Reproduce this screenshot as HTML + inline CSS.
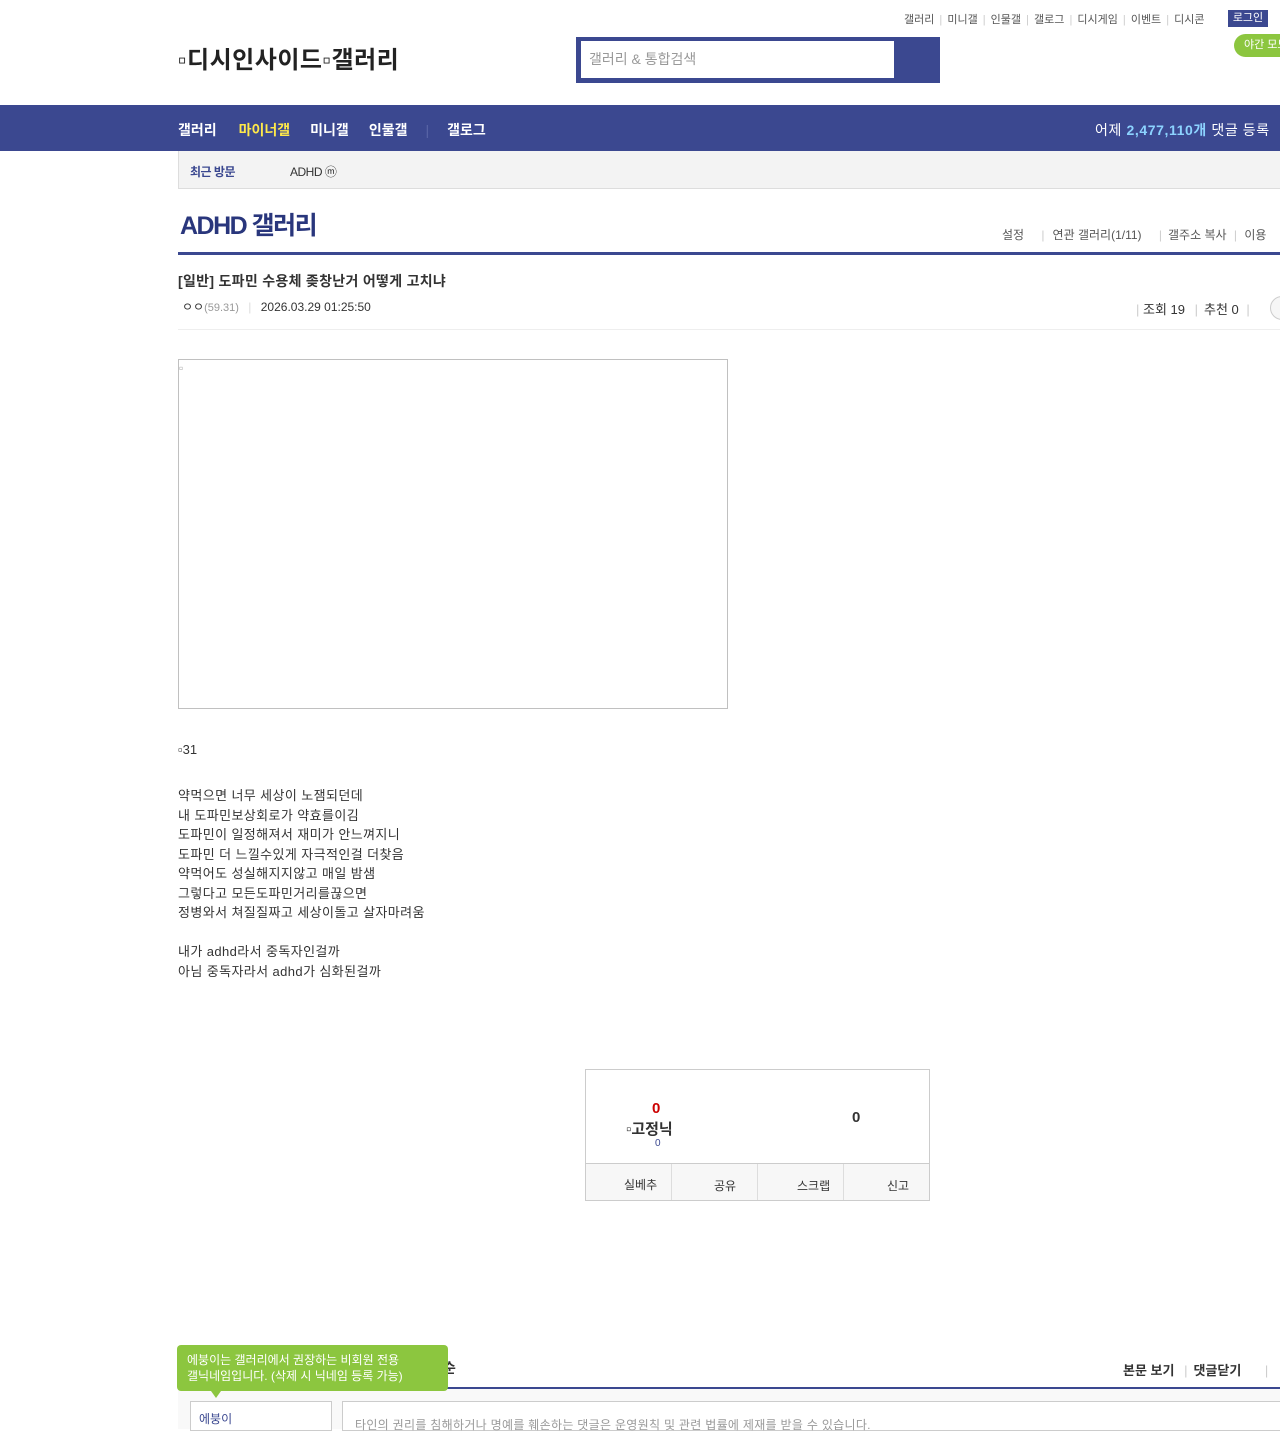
<!DOCTYPE html>
<html><head><meta charset="utf-8">
<style>
*{margin:0;padding:0;box-sizing:border-box}
body{width:1280px;height:1429px;overflow:hidden;background:#fff;font-family:"Liberation Sans","Noto Sans CJK KR",sans-serif;color:#333;position:relative}
.a{position:absolute;white-space:nowrap}
</style></head><body>
<div class="a" style="left:904px;top:11px;font-size:11px;color:#555;word-spacing:2px">갤러리 <span style="color:#ccc">|</span> 미니갤 <span style="color:#ccc">|</span> 인물갤 <span style="color:#ccc">|</span> 갤로그 <span style="color:#ccc">|</span> 디시게임 <span style="color:#ccc">|</span> 이벤트 <span style="color:#ccc">|</span> 디시콘</div>
<div class="a" style="left:1228px;top:10px;width:40px;height:17px;background:#3b4890;color:#fff;font-size:11px;text-align:center;line-height:17px">로그인</div>
<div class="a" style="left:1234px;top:34px;width:60px;height:23px;background:#8cc63f;color:#fff;font-size:11px;line-height:23px;padding-left:10px;border-radius:12px">야간 모드</div>
<div class="a" style="left:178px;top:40px;font-size:24px;font-weight:bold;color:#222;letter-spacing:0.5px">▫디시인사이드▫갤러리</div>
<div class="a" style="left:576px;top:37px;width:364px;height:46px;background:#3b4890"></div>
<div class="a" style="left:581px;top:41px;width:313px;height:37px;background:#fff;font-size:14px;color:#999;line-height:37px;padding-left:8px">갤러리 &amp; 통합검색</div>
<div class="a" style="left:0;top:105px;width:1280px;height:46px;background:#3b4890"></div>
<div class="a" style="left:178px;top:120px;font-size:14px;font-weight:bold;color:#fff">갤러리<span style="color:#ffe94a;margin-left:22px">마이너갤</span><span style="margin-left:20px">미니갤</span><span style="margin-left:20px">인물갤</span><span style="color:#5a66a6;margin:0 18px;font-weight:normal">|</span>갤로그</div>
<div class="a" style="left:1095px;top:120px;font-size:14px;color:#fff;letter-spacing:0.6px">어제 <b style="color:#8cd3ff">2,477,110개</b> 댓글 등록</div>
<div class="a" style="left:178px;top:151px;width:1110px;height:38px;background:#f3f3f3;border:1px solid #ddd;border-top:none"></div>
<div class="a" style="left:190px;top:163px;font-size:12px;font-weight:bold;color:#3b4890;letter-spacing:-0.5px">최근 방문</div>
<div class="a" style="left:290px;top:163px;font-size:12px;color:#333;letter-spacing:-0.5px">ADHD ⓜ</div>
<div class="a" style="left:180px;top:206px;font-size:25px;font-weight:bold;color:#29367c;letter-spacing:-1.5px">ADHD 갤러리</div>
<div class="a" style="left:1002px;top:226px;font-size:12px;color:#555">설정 <span style="color:#ccc;margin:0 8px 0 14px">|</span>연관 갤러리(1/11) <span style="color:#ccc;margin:0 6px 0 14px">|</span>갤주소 복사 <span style="color:#ccc;margin:0 4px">|</span> 이용</div>
<div class="a" style="left:178px;top:252px;width:1110px;height:3px;background:#3b4890"></div>
<div class="a" style="left:178px;top:271px;font-size:14px;font-weight:bold;color:#333;letter-spacing:0.3px">[일반] 도파민 수용체 좆창난거 어떻게 고치냐</div>
<div class="a" style="left:182px;top:298px;font-size:12px;color:#333">ㅇㅇ<span style="font-size:11px;color:#999">(59.31)</span> <span style="color:#ddd;margin:0 6px">|</span> 2026.03.29 01:25:50</div>
<div class="a" style="left:1136px;top:299px;font-size:13px;color:#333"><span style="color:#ccc">|</span> 조회 19 <span style="color:#ccc;margin:0 6px">|</span>추천 0 <span style="color:#ccc;margin:0 4px">|</span></div>
<div class="a" style="left:1270px;top:296px;width:24px;height:24px;border:1px solid #ccc;border-radius:12px;background:#f6f6f6"></div>
<div class="a" style="left:178px;top:329px;width:1110px;height:1px;background:#eee"></div>
<div class="a" style="left:178px;top:359px;width:550px;height:350px;border:1px solid #c0c0c0"></div>
<div class="a" style="left:179px;top:361px;font-size:12px;color:#aaa">▫</div>
<div class="a" style="left:178px;top:742px;font-size:13px;color:#333">▫31</div>
<div class="a" style="left:178px;top:786px;font-size:13px;line-height:19.5px;color:#333;letter-spacing:0.4px">약먹으면 너무 세상이 노잼되던데<br>내 도파민보상회로가 약효를이김<br>도파민이 일정해져서 재미가 안느껴지니<br>도파민 더 느낄수있게 자극적인걸 더찾음<br>약먹어도 성실해지지않고 매일 밤샘<br>그렇다고 모든도파민거리를끊으면<br>정병와서 쳐질질짜고 세상이돌고 살자마려움<br><br>내가 adhd라서 중독자인걸까<br>아님 중독자라서 adhd가 심화된걸까</div>
<div class="a" style="left:585px;top:1069px;width:345px;height:132px;border:1px solid #ccc"></div>
<div class="a" style="left:585px;top:1163px;width:345px;height:38px;border:1px solid #ccc;background:#f7f7f7"></div>
<div class="a" style="left:671px;top:1164px;width:1px;height:36px;background:#ddd"></div>
<div class="a" style="left:757px;top:1164px;width:1px;height:36px;background:#ddd"></div>
<div class="a" style="left:843px;top:1164px;width:1px;height:36px;background:#ddd"></div>
<div class="a" style="left:652px;top:1100px;font-size:15px;font-weight:bold;color:#c00">0</div>
<div class="a" style="left:626px;top:1118px;font-size:15px;font-weight:bold;color:#333">▫고정닉</div>
<div class="a" style="left:655px;top:1138px;font-size:10px;color:#3b4890">0</div>
<div class="a" style="left:852px;top:1109px;font-size:15px;font-weight:bold;color:#333">0</div>
<div class="a" style="left:624px;top:1176px;font-size:12px;color:#333">실베추</div>
<div class="a" style="left:714px;top:1177px;font-size:12px;color:#333">공유</div>
<div class="a" style="left:797px;top:1177px;font-size:12px;color:#333">스크랩</div>
<div class="a" style="left:887px;top:1177px;font-size:12px;color:#333">신고</div>
<div class="a" style="left:1123px;top:1360px;font-size:13px;font-weight:bold;color:#333">본문 보기 <span style="color:#ccc;font-weight:normal;margin:0 6px">|</span>댓글닫기 <span style="color:#ccc;font-weight:normal;margin-left:20px">|</span></div>
<div class="a" style="left:178px;top:1387px;width:1110px;height:2px;background:#3b4890"></div>
<div class="a" style="left:178px;top:1389px;width:1110px;height:40px;background:#f9f9f9"></div>
<div class="a" style="left:190px;top:1401px;width:142px;height:30px;border:1px solid #ccc;background:#fff;font-size:12px;color:#3b4890;padding:8px 0 0 8px">에붕이</div>
<div class="a" style="left:342px;top:1401px;width:950px;height:30px;border:1px solid #ccc;background:#fff;font-size:12px;color:#999;padding:14px 0 0 12px;letter-spacing:0.3px">타인의 권리를 침해하거나 명예를 훼손하는 댓글은 운영원칙 및 관련 법률에 제재를 받을 수 있습니다.</div>
<div class="a" style="left:443px;top:1358px;font-size:14px;font-weight:bold;color:#333">순</div>
<div class="a" style="left:177px;top:1345px;width:271px;height:46px;background:#8cc63f;border-radius:4px;color:#fff;font-size:12px;line-height:16px;padding:7px 0 0 10px">에붕이는 갤러리에서 권장하는 비회원 전용<br>갤닉네임입니다. (삭제 시 닉네임 등록 가능)</div>
<div class="a" style="left:211px;top:1391px;width:0;height:0;border-left:5px solid transparent;border-right:5px solid transparent;border-top:7px solid #8cc63f"></div>
</body></html>
